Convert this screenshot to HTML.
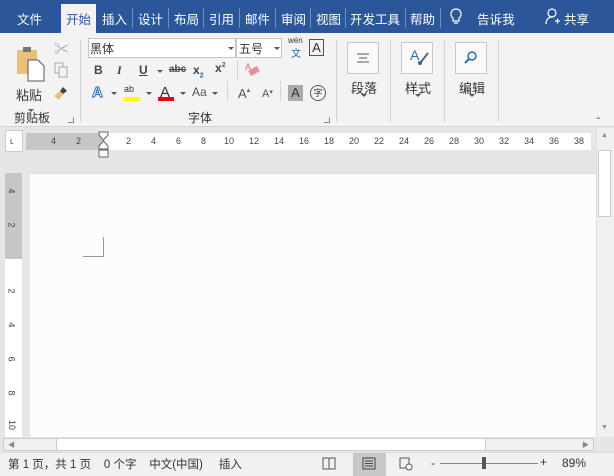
<!DOCTYPE html>
<html><head><meta charset="utf-8"><style>
*{margin:0;padding:0;box-sizing:border-box}
body{width:614px;height:476px;overflow:hidden;background:#e6e6e6;font-family:"Liberation Sans","Noto Sans CJK SC",sans-serif;position:relative;font-size:12px;color:#333}
.a{position:absolute}
.tab{position:absolute;top:9px;color:#fff;font-size:12.5px}
.sep{position:absolute;top:8px;width:1px;height:20px;background:#6f8fbf}
.vs{position:absolute;top:40px;width:1px;height:82px;background:#d5d5d5}
.lbl{position:absolute;font-size:12px;color:#333}
.ic{position:absolute;font-size:12px;color:#444;font-weight:bold}
.box{position:absolute;top:42px;width:32px;height:32px;border:1px solid #c8c8c8;background:#fafafa}
.arr{position:absolute;width:0;height:0;border-left:3px solid transparent;border-right:3px solid transparent;border-top:3px solid #555}
.rn{position:absolute;top:136px;font-size:9px;color:#444}
.vn{position:absolute;left:9px;font-size:9px;color:#444;transform:rotate(90deg)}
</style></head><body>
<!-- title/tab bar -->
<div class="a" style="left:0;top:0;width:614px;height:33px;background:#2b579a"></div>
<div class="a" style="left:61px;top:4px;width:35px;height:29px;background:#f3f3f3"></div>
<div class="tab" style="left:17px">文件</div>
<div class="tab" style="left:66px;color:#2b579a">开始</div>
<div class="tab" style="left:102px">插入</div>
<div class="sep" style="left:132px"></div>
<div class="tab" style="left:138px">设计</div>
<div class="sep" style="left:168px"></div>
<div class="tab" style="left:174px">布局</div>
<div class="sep" style="left:203px"></div>
<div class="tab" style="left:209px">引用</div>
<div class="sep" style="left:239px"></div>
<div class="tab" style="left:245px">邮件</div>
<div class="sep" style="left:275px"></div>
<div class="tab" style="left:281px">审阅</div>
<div class="sep" style="left:310px"></div>
<div class="tab" style="left:316px">视图</div>
<div class="sep" style="left:345px"></div>
<div class="tab" style="left:350px">开发工具</div>
<div class="sep" style="left:405px"></div>
<div class="tab" style="left:410px">帮助</div>
<div class="sep" style="left:440px"></div>
<svg class="a" style="left:450px;top:8px" width="12" height="18"><path d="M6 1a5 5 0 0 0-3 9v3h6v-3a5 5 0 0 0-3-9zM4 15h4" fill="none" stroke="#fff" stroke-width="1.2"/></svg>
<div class="tab" style="left:477px">告诉我</div>
<svg class="a" style="left:545px;top:8px" width="16" height="18"><circle cx="7" cy="5" r="4" fill="none" stroke="#fff" stroke-width="1.2"/><path d="M1 16c0-5 3-7 6-7M10 13h5M12.5 10.5v5" fill="none" stroke="#fff" stroke-width="1.2"/></svg>
<div class="tab" style="left:564px">共享</div>
<!-- ribbon -->
<div class="a" style="left:0;top:33px;width:614px;height:94px;background:#f3f3f3;border-bottom:1px solid #d5d5d5"></div>
<div class="vs" style="left:80px"></div><div class="vs" style="left:336px"></div><div class="vs" style="left:390px"></div><div class="vs" style="left:444px"></div><div class="vs" style="left:498px"></div>
<!-- clipboard -->
<svg class="a" style="left:16px;top:46px" width="30" height="36"><rect x="1" y="4" width="20" height="24" fill="#e8c07a"/><rect x="7" y="1" width="8" height="5" fill="#777"/><path d="M12 14h10l6 6v15H12z" fill="#fff" stroke="#555"/></svg>
<div class="lbl" style="left:16px;top:85px;font-size:13px">粘贴</div>
<div class="arr" style="left:28px;top:109px"></div>
<div class="ic" style="left:54px;top:38px;color:#aaa;font-size:15px;font-weight:normal">✂</div>
<svg class="a" style="left:54px;top:62px" width="14" height="16"><rect x="1" y="1" width="8" height="10" fill="none" stroke="#aaa"/><rect x="5" y="5" width="8" height="10" fill="#f3f3f3" stroke="#aaa"/></svg>
<svg class="a" style="left:53px;top:85px" width="16" height="16"><path d="M10 2l4 4-4 3-3-3z" fill="#444"/><path d="M7 6l3 3-4 6-5-4z" fill="#e8c07a"/></svg>
<div class="lbl" style="left:14px;top:109px">剪贴板</div>
<div class="a" style="left:68px;top:117px;width:6px;height:6px;border-right:1px solid #888;border-bottom:1px solid #888"></div>
<!-- font -->
<div class="a" style="left:88px;top:38px;width:148px;height:20px;background:#fff;border:1px solid #c6c6c6"></div>
<div class="lbl" style="left:90px;top:40px">黑体</div>
<div class="arr" style="left:228px;top:47px"></div>
<div class="a" style="left:236px;top:38px;width:46px;height:20px;background:#fff;border:1px solid #c6c6c6"></div>
<div class="lbl" style="left:239px;top:40px">五号</div>
<div class="arr" style="left:274px;top:47px"></div>
<div class="a" style="left:288px;top:36px;font-size:8px;color:#333">wén</div>
<div class="a" style="left:291px;top:45px;font-size:10px;color:#2b6cb0">文</div>
<div class="a" style="left:309px;top:39px;width:15px;height:17px;border:1px solid #2b579a;font-size:13px;text-align:center;line-height:15px;color:#333">A</div>
<div class="ic" style="left:94px;top:63px">B</div>
<div class="ic" style="left:117px;top:63px;font-style:italic;font-family:'Liberation Serif',serif">I</div>
<div class="ic" style="left:139px;top:63px;text-decoration:underline">U</div>
<div class="arr" style="left:157px;top:70px"></div>
<div class="ic" style="left:169px;top:64px;font-size:10px;text-decoration:line-through">abc</div>
<div class="ic" style="left:193px;top:63px">x<sub style="font-size:7px;color:#2b6cb0">2</sub></div>
<div class="ic" style="left:215px;top:61px">x<sup style="font-size:7px;color:#2b6cb0">2</sup></div>
<div class="a" style="left:237px;top:60px;width:1px;height:20px;background:#d5d5d5"></div>
<svg class="a" style="left:244px;top:61px" width="16" height="16"><text x="1" y="9" font-size="9" fill="#d66">A</text><rect x="5" y="7" width="10" height="6" transform="rotate(-30 10 10)" fill="#f08a9a"/></svg>
<div class="a" style="left:92px;top:84px;font-size:15px;color:#fff;-webkit-text-stroke:1px #2b6cb0;font-weight:bold">A</div>
<div class="arr" style="left:111px;top:92px"></div>
<div class="a" style="left:124px;top:84px;font-size:9px;color:#333">ab</div>
<div class="a" style="left:124px;top:97px;width:16px;height:4px;background:#ff0"></div>
<div class="arr" style="left:146px;top:92px"></div>
<div class="a" style="left:160px;top:84px;font-size:15px;color:#333">A</div>
<div class="a" style="left:158px;top:97px;width:16px;height:4px;background:#e00"></div>
<div class="arr" style="left:180px;top:92px"></div>
<div class="a" style="left:192px;top:85px;font-size:12px;color:#555">Aa</div>
<div class="arr" style="left:212px;top:92px"></div>
<div class="a" style="left:227px;top:81px;width:1px;height:20px;background:#d5d5d5"></div>
<div class="a" style="left:238px;top:86px;font-size:13px;color:#555">A<span style="font-size:7px;color:#2b6cb0;vertical-align:top">▴</span></div>
<div class="a" style="left:262px;top:88px;font-size:11px;color:#555">A<span style="font-size:7px;color:#2b6cb0;vertical-align:top">▾</span></div>
<div class="a" style="left:280px;top:81px;width:1px;height:20px;background:#d5d5d5"></div>
<div class="a" style="left:288px;top:85px;width:15px;height:16px;background:#aaa;color:#333;font-size:13px;text-align:center;line-height:16px">A</div>
<div class="a" style="left:310px;top:85px;width:16px;height:16px;border:1px solid #555;border-radius:50%;font-size:9px;text-align:center;line-height:14px">字</div>
<div class="lbl" style="left:188px;top:109px">字体</div>
<div class="a" style="left:324px;top:117px;width:6px;height:6px;border-right:1px solid #888;border-bottom:1px solid #888"></div>
<!-- paragraph/style/edit -->
<div class="box" style="left:347px"></div>
<svg class="a" style="left:355px;top:50px" width="16" height="16"><path d="M2 4h12M4 8h8M2 12h12" stroke="#555"/></svg>
<div class="lbl" style="left:351px;top:78px;font-size:13px">段落</div>
<div class="arr" style="left:361px;top:94px"></div>
<div class="box" style="left:401px"></div>
<div class="a" style="left:410px;top:47px;font-size:14px;color:#2b6cb0">A</div>
<svg class="a" style="left:417px;top:52px" width="12" height="14"><path d="M11 1L4 10" stroke="#666" stroke-width="2"/><circle cx="3" cy="11" r="2" fill="#2b6cb0"/></svg>
<div class="lbl" style="left:405px;top:78px;font-size:13px">样式</div>
<div class="arr" style="left:415px;top:94px"></div>
<div class="box" style="left:455px"></div>
<svg class="a" style="left:463px;top:50px" width="16" height="16"><circle cx="9" cy="6" r="4" fill="none" stroke="#2b6cb0" stroke-width="1.5"/><path d="M6 9L2 13" stroke="#2b6cb0" stroke-width="2"/></svg>
<div class="lbl" style="left:459px;top:78px;font-size:13px">编辑</div>
<div class="arr" style="left:469px;top:94px"></div>
<div class="a" style="left:595px;top:116px;font-size:8px;color:#555">⌃</div>
<!-- ruler area -->
<div class="a" style="left:0;top:128px;width:614px;height:44px;background:#e6e6e6"></div>
<div class="a" style="left:5px;top:130px;width:18px;height:22px;background:#fff;border:1px solid #ccc"></div>
<div class="a" style="left:10px;top:136px;font-size:9px;color:#444">ʟ</div>
<div class="a" style="left:26px;top:133px;width:78px;height:17px;background:#c6c6c6"></div>
<div class="a" style="left:104px;top:133px;width:487px;height:17px;background:#fff"></div>
<div class="rn" style="left:51px">4</div><div class="rn" style="left:76px">2</div>
<div class="rn" style="left:126px">2</div><div class="rn" style="left:151px">4</div><div class="rn" style="left:176px">6</div><div class="rn" style="left:201px">8</div><div class="rn" style="left:224px">10</div><div class="rn" style="left:249px">12</div><div class="rn" style="left:274px">14</div><div class="rn" style="left:299px">16</div><div class="rn" style="left:324px">18</div><div class="rn" style="left:349px">20</div><div class="rn" style="left:374px">22</div><div class="rn" style="left:399px">24</div><div class="rn" style="left:424px">26</div><div class="rn" style="left:449px">28</div><div class="rn" style="left:474px">30</div><div class="rn" style="left:499px">32</div><div class="rn" style="left:524px">34</div><div class="rn" style="left:549px">36</div><div class="rn" style="left:574px">38</div>
<svg class="a" style="left:98px;top:131px" width="12" height="27"><path d="M1 1h9v3l-4.5 5L1 4z M5.5 10L10 15v3H1v-3z" fill="#fff" stroke="#666"/><rect x="1" y="19" width="9" height="7" fill="#fff" stroke="#666"/></svg>
<!-- vertical ruler -->
<div class="a" style="left:5px;top:173px;width:17px;height:86px;background:#c6c6c6"></div>
<div class="a" style="left:5px;top:259px;width:17px;height:178px;background:#fff"></div>
<div class="vn" style="top:186px">4</div><div class="vn" style="top:220px">2</div><div class="vn" style="top:286px">2</div><div class="vn" style="top:320px">4</div><div class="vn" style="top:354px">6</div><div class="vn" style="top:388px">8</div><div class="vn" style="top:420px;left:7px">10</div>
<!-- page -->
<div class="a" style="left:30px;top:173px;width:566px;height:264px;background:#fcfcfc;border-top:1px solid #ddd"></div>
<div class="a" style="left:83px;top:237px;width:21px;height:20px;border-right:1px solid #999;border-bottom:1px solid #999"></div>
<!-- vscroll -->
<div class="a" style="left:596px;top:128px;width:18px;height:309px;background:#f0f0f0;border-left:1px solid #ddd"></div>
<div class="a" style="left:598px;top:150px;width:13px;height:67px;background:#fff;border:1px solid #ccc"></div>
<div class="a" style="left:601px;top:132px;font-size:7px;color:#888">▲</div>
<div class="a" style="left:601px;top:424px;font-size:7px;color:#888">▼</div>
<!-- hscroll -->
<div class="a" style="left:0;top:437px;width:614px;height:15px;background:#e6e6e6"></div>
<div class="a" style="left:3px;top:438px;width:591px;height:13px;background:#f0f0f0;border:1px solid #ccc"></div>
<div class="a" style="left:56px;top:438px;width:430px;height:13px;background:#fff;border:1px solid #ccc"></div>
<div class="a" style="left:8px;top:440px;font-size:7px;color:#888">◀</div>
<div class="a" style="left:582px;top:440px;font-size:7px;color:#888">▶</div>
<!-- status -->
<div class="a" style="left:0;top:452px;width:614px;height:24px;background:#f1f1f1;border-top:1px solid #ddd"></div>
<div class="a" style="left:8px;top:456px;font-size:11.5px;color:#333;white-space:pre">第 1 页，共 1 页    0 个字    中文(中国)     插入</div>
<div class="a" style="left:353px;top:453px;width:33px;height:23px;background:#c8c8c8"></div>
<svg class="a" style="left:322px;top:457px" width="14" height="13"><path d="M1 1h5l1 1 1-1h5v11H1z M7 2v10" fill="none" stroke="#555"/></svg>
<svg class="a" style="left:362px;top:457px" width="14" height="13"><rect x="1" y="1" width="12" height="11" fill="none" stroke="#444"/><path d="M3 4h8M3 6.5h8M3 9h8" stroke="#444"/></svg>
<svg class="a" style="left:399px;top:457px" width="14" height="14"><rect x="1" y="1" width="9" height="10" fill="none" stroke="#555"/><circle cx="10" cy="10" r="3" fill="#fff" stroke="#555"/></svg>
<div class="a" style="left:431px;top:456px;font-size:12px;color:#333">-</div>
<div class="a" style="left:440px;top:463px;width:98px;height:1px;background:#888"></div>
<div class="a" style="left:482px;top:457px;width:4px;height:12px;background:#555"></div>
<div class="a" style="left:540px;top:455px;font-size:12px;color:#333">+</div>
<div class="a" style="left:562px;top:456px;font-size:12px;color:#333">89%</div>
</body></html>
